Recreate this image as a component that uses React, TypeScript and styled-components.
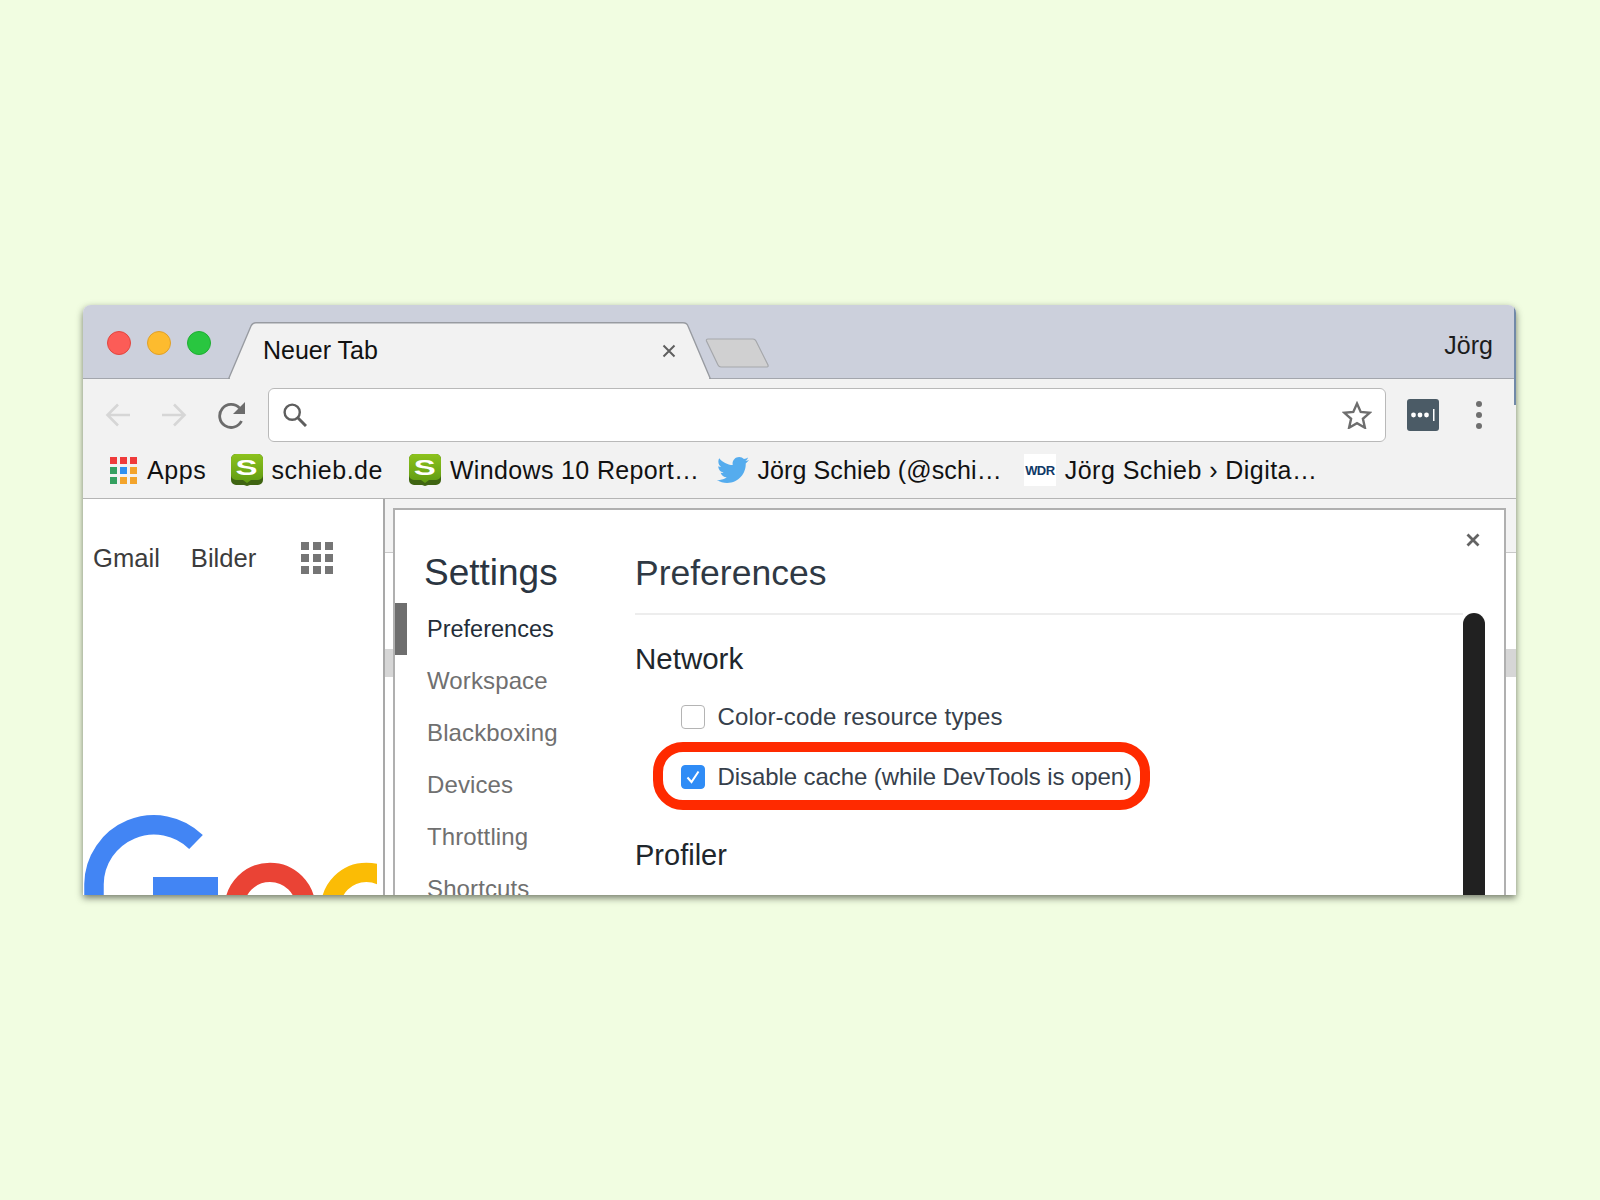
import React from 'react'
import styled, { createGlobalStyle } from 'styled-components'
import { FaTwitter } from 'react-icons/fa'

const GlobalStyle = createGlobalStyle`
  html, body {
    margin: 0;
    height: 100%;
    background: #f1fde1;
    font-family: "Liberation Sans", Arial, sans-serif;
  }
`

const Page = styled.div`
  height: 1200px;
  padding: 305px 84px 0 83px;
  box-sizing: border-box;
  overflow: hidden;
`

const BrowserWindow = styled.div`
  position: relative;
  height: 590px;
  display: flex;
  flex-direction: column;
  border-radius: 8px 8px 0 0;
  background: #f2f2f2;
  box-shadow: 0 3px 7px rgba(50, 55, 45, 0.65);
  overflow: hidden;

  &::after {
    content: '';
    position: absolute;
    top: 0;
    right: 0;
    width: 2px;
    height: 100px;
    background: #7189a8;
  }
`

const TabStrip = styled.div`
  height: 74px;
  flex: none;
  box-sizing: border-box;
  display: flex;
  align-items: flex-end;
  background: #ccd0dc;
  border-bottom: 1px solid #a3a6ad;
`

const Lights = styled.div`
  align-self: flex-start;
  display: flex;
  gap: 16px;
  margin: 26px 0 0 23.5px;
`

const Light = styled.span<{ $color: string; $edge: string }>`
  width: 24px;
  height: 24px;
  box-sizing: border-box;
  border-radius: 50%;
  background: ${(p) => p.$color};
  border: 1px solid ${(p) => p.$edge};
`

const Tab = styled.div`
  position: relative;
  width: 483px;
  height: 57px;
  margin: 0 0 -1px 17.5px;
  box-sizing: border-box;
  padding: 0 35px 0 35px;
  display: flex;
  align-items: center;
  justify-content: space-between;
  font-size: 25px;
  color: #111;
`

const TabShape = styled.svg`
  position: absolute;
  inset: 0;
`

const TabTitle = styled.span`
  position: relative;
`

const CloseGlyph = styled.div`
  position: relative;
`

const NewTab = styled.svg`
  align-self: flex-start;
  flex: none;
  margin: 33px 0 0 -6px;
`

const Profile = styled.div`
  align-self: flex-start;
  margin: 26px 23px 0 auto;
  font-size: 25px;
  line-height: 28px;
  color: #1c1c1c;
`

const Toolbar = styled.div`
  height: 70px;
  flex: none;
  box-sizing: border-box;
  display: flex;
  align-items: center;
  padding: 2px 0 0 22px;
`

const NavButton = styled.svg<{ $gap?: number }>`
  flex: none;
  display: block;
  margin-left: ${(p) => p.$gap ?? 0}px;
`

const Omnibox = styled.div`
  width: 1118px;
  height: 54px;
  flex: none;
  margin-left: 22px;
  box-sizing: border-box;
  padding: 0 13px 0 14px;
  display: flex;
  align-items: center;
  justify-content: space-between;
  background: #fff;
  border: 1px solid #b9b9b9;
  border-radius: 6px;
`

const Extension = styled.svg`
  flex: none;
  margin-left: 21px;
`

const MenuDots = styled.svg`
  flex: none;
  margin-left: 37px;
`

const Bookmarks = styled.div`
  height: 50px;
  flex: none;
  box-sizing: border-box;
  padding: 5px 0 0 27px;
  display: flex;
  align-items: flex-start;
  border-bottom: 1px solid #b5b5b5;
`

const Bookmark = styled.div<{ $gap?: number; $iconGap?: number; $spacing?: number }>`
  height: 32px;
  display: flex;
  align-items: center;
  gap: ${(p) => p.$iconGap ?? 8}px;
  margin-left: ${(p) => p.$gap ?? 0}px;
  font-size: 25px;
  letter-spacing: ${(p) => p.$spacing ?? 0.35}px;
  color: #111;
  white-space: nowrap;
`

const AppsGrid = styled.div`
  width: 27px;
  display: grid;
  grid-template-columns: repeat(3, 7px);
  grid-auto-rows: 7px;
  gap: 3px;
`

const AppsDot = styled.span<{ $color: string }>`
  background: ${(p) => p.$color};
`

const WdrBadge = styled.div`
  width: 32px;
  height: 32px;
  display: flex;
  align-items: center;
  justify-content: center;
  background: #fff;
  font-size: 13px;
  font-weight: 700;
  letter-spacing: -0.6px;
  color: #0f3a68;
`

const Content = styled.div`
  flex: 1;
  min-height: 0;
  display: flex;
`

const GooglePage = styled.div`
  width: 300px;
  flex: none;
  display: flex;
  flex-direction: column;
  background: #fff;
`

const GoogleLinks = styled.div`
  padding: 43px 0 0 10px;
  display: flex;
  align-items: center;
  font-size: 25.6px;
  line-height: 32px;
  color: #3c3c3c;
`

const GoogleLink = styled.span`
  margin-right: 31px;
`

const AppsLauncher = styled.div`
  margin-left: 14px;
  display: grid;
  grid-template-columns: repeat(3, 8px);
  grid-auto-rows: 8px;
  gap: 4px;
`

const LauncherDot = styled.span`
  background: #757575;
`

const GoogleLogo = styled.svg`
  display: block;
  margin-top: auto;
`

const PanelDivider = styled.div`
  width: 2px;
  flex: none;
  background: #a9a9a9;
`

const DevTools = styled.div`
  position: relative;
  flex: 1;
  background: #fff;
`

const DevToolsStrip = styled.div`
  height: 53px;
  background: #f3f3f3;
  border-bottom: 1px solid #c9c9c9;
`

const SplitHandle = styled.div`
  height: 28px;
  margin-top: 96px;
  background: #d6d6d6;
`

const Dialog = styled.div`
  position: absolute;
  top: 9px;
  left: 8px;
  right: 10px;
  bottom: 0;
  display: flex;
  background: #fff;
  border: 2px solid #b0b0b0;
  border-bottom: 0;
`

const CloseButton = styled.div`
  position: absolute;
  top: 23px;
  right: 24px;
`

const Sidebar = styled.div`
  width: 240px;
  flex: none;
  overflow: hidden;
`

const SidebarTitle = styled.div`
  padding: 43px 0 10px 29px;
  font-size: 37px;
  line-height: 40px;
  color: #2b3541;
`

const NavItem = styled.div<{ $active?: boolean }>`
  height: 52px;
  box-sizing: border-box;
  padding-left: 20px;
  border-left: 12px solid ${(p) => (p.$active ? '#6e6e6e' : 'transparent')};
  font-size: ${(p) => (p.$active ? 23.5 : 24)}px;
  letter-spacing: ${(p) => (p.$active ? 0 : 0.12)}px;
  line-height: 52px;
  color: ${(p) => (p.$active ? '#232d38' : '#707070')};
`

const Main = styled.div`
  flex: 1;
  min-width: 0;
  display: flex;
  flex-direction: column;
  padding-right: 19px;
`

const MainHeader = styled.div`
  height: 105px;
  flex: none;
  box-sizing: border-box;
  margin-right: 22px;
  padding-top: 43px;
  border-bottom: 2px solid #ededed;
  font-size: 35.5px;
  line-height: 40px;
  color: #2f3944;
`

const MainBody = styled.div`
  flex: 1;
  min-height: 0;
  display: flex;
  margin-top: -2px;
`

const Sections = styled.div`
  flex: 1;
  padding-top: 31px;
`

const SectionTitle = styled.div<{ $top?: number; $size?: number }>`
  margin-top: ${(p) => p.$top ?? 0}px;
  font-size: ${(p) => p.$size ?? 29}px;
  line-height: 30px;
  color: #20262c;
`

const Option = styled.div<{ $top: number; $spacing: number }>`
  position: relative;
  height: 30px;
  margin: ${(p) => p.$top}px 0 0 45.5px;
  display: flex;
  align-items: center;
  gap: 13px;
  font-size: 24px;
  letter-spacing: ${(p) => p.$spacing}px;
  color: #36404b;
  white-space: nowrap;
`

const Checkbox = styled.span<{ $checked?: boolean }>`
  width: 24px;
  height: 24px;
  flex: none;
  box-sizing: border-box;
  display: flex;
  align-items: center;
  justify-content: center;
  border-radius: 4px;
  background: ${(p) => (p.$checked ? '#2f8cf6' : '#fff')};
  border: 1px solid ${(p) => (p.$checked ? '#2f8cf6' : '#b4b4b4')};
`

const Highlight = styled.div`
  position: absolute;
  top: -20px;
  left: -27.5px;
  width: 497px;
  height: 68px;
  box-sizing: border-box;
  border: 10px solid #ff2a00;
  border-radius: 30px;
`

const Scrollbar = styled.div`
  width: 22px;
  flex: none;
  background: #212121;
  border-radius: 11px 11px 0 0;
`

const X = ({ size, color, width }: { size: number; color: string; width: number }) => (
  <svg width={size} height={size} viewBox="0 0 14 14" style={{ display: 'block' }}>
    <path d="M1.5 1.5l11 11M12.5 1.5l-11 11" stroke={color} strokeWidth={width} fill="none" />
  </svg>
)

const SchiebIcon = () => (
  <svg width="32" height="32" viewBox="0 0 32 32" style={{ flex: 'none', display: 'block' }}>
    <defs>
      <linearGradient id="schiebGreen" x1="0" y1="0" x2="0" y2="1">
        <stop offset="0" stopColor="#8cc21d" />
        <stop offset="1" stopColor="#5f9a12" />
      </linearGradient>
    </defs>
    <path d="M5 0h22a5 5 0 0 1 5 5v21a5 5 0 0 1-5 5h-8l-3 1-3-1H5a5 5 0 0 1-5-5V5a5 5 0 0 1 5-5z" fill="#3f6412" />
    <path d="M5 0h22a5 5 0 0 1 5 5v16a5 5 0 0 1-5 5h-7l-4 3-4-3H5a5 5 0 0 1-5-5V5a5 5 0 0 1 5-5z" fill="url(#schiebGreen)" />
    <text
      x="16"
      y="21"
      textAnchor="middle"
      fontFamily="Liberation Sans, Arial, sans-serif"
      fontSize="22"
      fontWeight="700"
      fill="#fff"
      transform="translate(-8 0) scale(1.5 1)"
    >
      S
    </text>
  </svg>
)

const appsColors = ['#ef3b3b', '#ef3b3b', '#ef3b3b', '#34a060', '#2f90f0', '#f3a42c', '#34a060', '#f3a42c', '#f3a42c']
const navItems = ['Preferences', 'Workspace', 'Blackboxing', 'Devices', 'Throttling', 'Shortcuts']

const App: React.FC = () => {
  return (
    <Page>
      <GlobalStyle />
      <BrowserWindow>
        <TabStrip>
          <Lights>
            <Light $color="#fc5c57" $edge="#e2463f" />
            <Light $color="#fdbb2e" $edge="#e0a028" />
            <Light $color="#29c640" $edge="#1fae33" />
          </Lights>
          <Tab>
            <TabShape width="483" height="57" viewBox="0 0 483 57">
              <path
                d="M0.5 57L23 4Q24.5 .7 28 .7H455Q459 .7 460 4L482.5 57Z"
                fill="#f2f2f2"
                stroke="#989ba1"
                strokeWidth="1.4"
              />
              <path d="M2 57H481" stroke="#f2f2f2" strokeWidth="2" />
            </TabShape>
            <TabTitle>Neuer Tab</TabTitle>
            <CloseGlyph>
              <X size={14} color="#5f5f5f" width={2} />
            </CloseGlyph>
          </Tab>
          <NewTab width="64" height="30" viewBox="0 0 64 30">
            <path
              d="M3 1H48Q50 1 51 3L63 27Q63.5 29 62 29H16Q14 29 13 27L1.5 3Q1 1 3 1Z"
              fill="#d0d0d1"
              stroke="#a5a7ab"
              strokeWidth="1.2"
            />
          </NewTab>
          <Profile>Jörg</Profile>
        </TabStrip>

        <Toolbar>
          <NavButton width="26" height="26" viewBox="0 0 26 26">
            <path d="M25 13H3M13 2.5L2.5 13 13 23.5" fill="none" stroke="#d6d6d6" strokeWidth="2.6" />
          </NavButton>
          <NavButton $gap={30} width="26" height="26" viewBox="0 0 26 26">
            <path d="M1 13h22M13 2.5L23.5 13 13 23.5" fill="none" stroke="#d6d6d6" strokeWidth="2.6" />
          </NavButton>
          <NavButton $gap={30} width="29" height="28" viewBox="0 0 29 28">
            <path d="M24.5 20a11.5 11.5 0 1 1-2-13" fill="none" stroke="#6c6c6c" strokeWidth="2.8" />
            <path d="M28 1v12H16z" fill="#6c6c6c" />
          </NavButton>
          <Omnibox>
            <svg width="24" height="24" viewBox="0 0 24 24">
              <circle cx="9.2" cy="9.2" r="7.6" fill="none" stroke="#5e5e5e" strokeWidth="2.4" />
              <path d="M14.8 14.8L23 23" stroke="#5e5e5e" strokeWidth="3" />
            </svg>
            <svg width="30" height="28" viewBox="0 0 30 28">
              <path
                d="M15 2.6l3.7 8.3 9 .9-6.8 6 2 8.9L15 22.1l-7.9 4.6 2-8.9-6.8-6 9-.9z"
                fill="none"
                stroke="#6e6e6e"
                strokeWidth="2.4"
              />
            </svg>
          </Omnibox>
          <Extension width="32" height="32" viewBox="0 0 32 32">
            <rect width="32" height="32" rx="3" fill="#4b5b66" />
            <circle cx="6.5" cy="16" r="2.4" fill="#fff" />
            <circle cx="13" cy="16" r="2.4" fill="#fff" />
            <circle cx="19.5" cy="16" r="2.4" fill="#fff" />
            <rect x="26" y="10" width="1.5" height="12" fill="#fff" />
          </Extension>
          <MenuDots width="6" height="28" viewBox="0 0 6 28">
            <circle cx="3" cy="3" r="3" fill="#6f6f6f" />
            <circle cx="3" cy="14" r="3" fill="#6f6f6f" />
            <circle cx="3" cy="25" r="3" fill="#6f6f6f" />
          </MenuDots>
        </Toolbar>

        <Bookmarks>
          <Bookmark $iconGap={10} $spacing={0.6}>
            <AppsGrid>
              {appsColors.map((c, i) => (
                <AppsDot key={i} $color={c} />
              ))}
            </AppsGrid>
            Apps
          </Bookmark>
          <Bookmark $gap={25} $spacing={0.5}>
            <SchiebIcon />
            schieb.de
          </Bookmark>
          <Bookmark $gap={26} $iconGap={9}>
            <SchiebIcon />
            Windows 10 Report…
          </Bookmark>
          <Bookmark $gap={18} $spacing={0.12} $iconGap={8}>
            <FaTwitter size={32} color="#55acee" />
            Jörg Schieb (@schi…
          </Bookmark>
          <Bookmark $gap={22} $spacing={0.45} $iconGap={9}>
            <WdrBadge>WDR</WdrBadge>
            Jörg Schieb › Digita…
          </Bookmark>
        </Bookmarks>

        <Content>
          <GooglePage>
            <GoogleLinks>
              <GoogleLink>Gmail</GoogleLink>
              <GoogleLink>Bilder</GoogleLink>
              <AppsLauncher>
                {Array.from({ length: 9 }).map((_, i) => (
                  <LauncherDot key={i} />
                ))}
              </AppsLauncher>
            </GoogleLinks>
            <GoogleLogo width="294" height="81" viewBox="0 0 294 81">
              <path d="M113 28A60 60 0 0 0 11 70V90" fill="none" stroke="#4285f4" strokeWidth="19.5" />
              <rect x="70" y="63" width="65" height="30" fill="#4285f4" />
              <circle cx="187" cy="94" r="35.7" fill="none" stroke="#ea4335" strokeWidth="19.3" />
              <circle cx="283.3" cy="94" r="35.7" fill="none" stroke="#fbbc05" strokeWidth="19.3" />
            </GoogleLogo>
          </GooglePage>
          <PanelDivider />
          <DevTools>
            <DevToolsStrip />
            <SplitHandle />
            <Dialog>
              <CloseButton>
                <X size={14} color="#636363" width={2.8} />
              </CloseButton>
              <Sidebar>
                <SidebarTitle>Settings</SidebarTitle>
                {navItems.map((item, i) => (
                  <NavItem key={item} $active={i === 0}>
                    {item}
                  </NavItem>
                ))}
              </Sidebar>
              <Main>
                <MainHeader>Preferences</MainHeader>
                <MainBody>
                  <Sections>
                    <SectionTitle $size={29.5}>Network</SectionTitle>
                    <Option $top={28} $spacing={0.15}>
                      <Checkbox />
                      Color-code resource types
                    </Option>
                    <Option $top={30} $spacing={-0.08}>
                      <Checkbox $checked>
                        <svg width="16" height="16" viewBox="0 0 16 16">
                          <path d="M2.5 8.5L6.5 13 13.5 2.5" fill="none" stroke="#fff" strokeWidth="2" />
                        </svg>
                      </Checkbox>
                      Disable cache (while DevTools is open)
                      <Highlight />
                    </Option>
                    <SectionTitle $top={48}>Profiler</SectionTitle>
                  </Sections>
                  <Scrollbar />
                </MainBody>
              </Main>
            </Dialog>
          </DevTools>
        </Content>
      </BrowserWindow>
    </Page>
  )
}

export default App
